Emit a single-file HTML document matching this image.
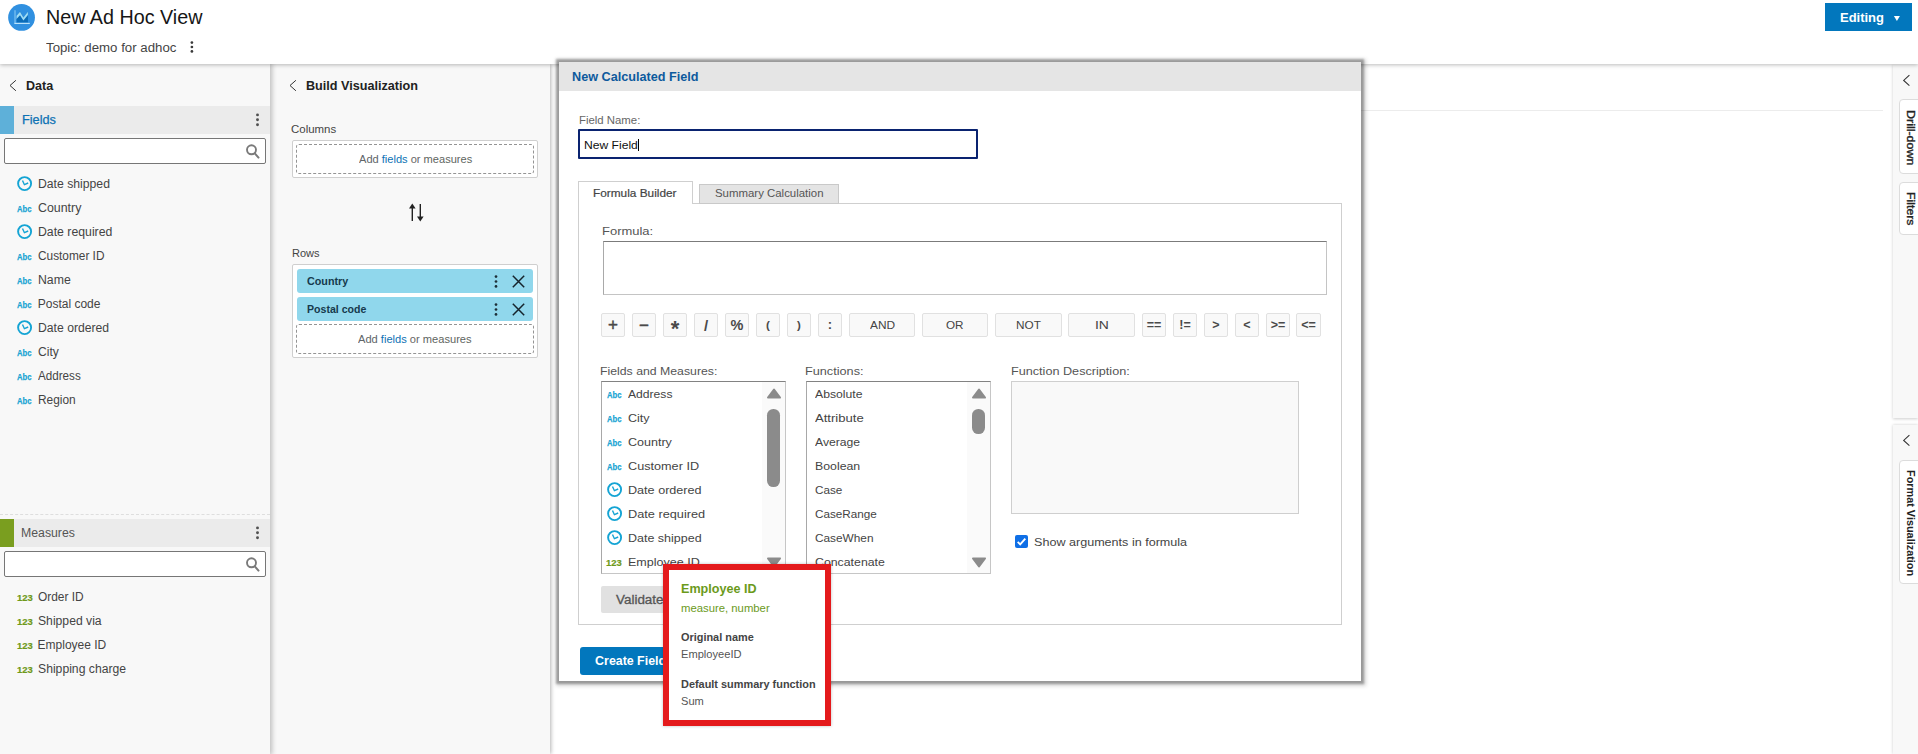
<!DOCTYPE html>
<html>
<head>
<meta charset="utf-8">
<title>New Ad Hoc View</title>
<style>
*{box-sizing:border-box;margin:0;padding:0}
html,body{width:1918px;height:754px;overflow:hidden;background:#fff}
body{font-family:"Liberation Sans",sans-serif;font-size:12px;color:#333;position:relative}
.abs{position:absolute}
.t{position:absolute;white-space:nowrap;transform-origin:0 50%}
#hdr{left:0;top:0;width:1918px;height:64px;background:#fff;box-shadow:0 1px 4px rgba(0,0,0,.27);z-index:5}
#pdata{left:0;top:64px;width:270px;height:690px;background:#f8f8f8;box-shadow:1px 0 5px 1px rgba(0,0,0,.24);z-index:3}
#pbuild{left:270px;top:64px;width:280px;height:690px;background:#f8f8f8;box-shadow:1px 0 4px rgba(0,0,0,.3);z-index:2}

.sechdr{position:absolute;left:0;width:270px;height:28px;background:#ebebeb}
.search{position:absolute;left:4px;width:262px;height:26px;background:#fff;border:1px solid #767676;border-radius:2px}
.abc{font-family:"Liberation Sans",sans-serif}
</style>
</head>
<body>
<div id="hdr" class="abs">
<svg class="abs" style="left:8px;top:4px" width="27" height="27" viewBox="8 4 27 27">
<circle cx="21.55" cy="17.45" r="13.4" fill="#3090e0"/>
<path d="M16.7 22.4V15.6L20 11.6L23.5 17.5L27.9 11.7V22.4Z" fill="#0b6cb8"/>
<path d="M16.5 15.8L20 11.7L23.4 17.5L27.9 11.7V14.9L23.4 20.6L20 15.2L16.5 19Z" fill="#9fdcf5"/>
<path d="M15 10.3V23.4" fill="none" stroke="#7ec4f1" stroke-width="1.2"/><path d="M14.4 23.4H29.8" fill="none" stroke="#c2e7fb" stroke-width="1.1"/>
</svg>
<div class="t" id="title" style="left:45.76px;top:6px;font-size:20.4px;line-height:22px;color:#161616;transform:scaleX(0.9675);">New Ad Hoc View</div>
<div class="t" id="topic" style="left:45.99px;top:41px;font-size:12px;line-height:14px;color:#444;transform:scaleX(1.1046);">Topic: demo for adhoc</div>
<svg class="abs" style="left:190px;top:41px;overflow:visible" width="4" height="12"><circle cx="1.9" cy="1.6" r="1.35" fill="#3a3a3a"/><circle cx="1.9" cy="6" r="1.35" fill="#3a3a3a"/><circle cx="1.9" cy="10.4" r="1.35" fill="#3a3a3a"/></svg>
<div class="abs" style="left:1825px;top:3px;width:87px;height:28px;background:#0277bd"></div>
<div class="t" id="editing" style="left:1839.79px;top:10px;font-size:12.8px;line-height:15px;color:#fff;font-weight:bold;transform:scaleX(1.0132);">Editing</div>
<svg class="abs" style="left:1893px;top:15px" width="8" height="7"><path d="M0.9 1H6.9L3.9 5.9Z" fill="#fff"/></svg>
</div>
<div id="pdata" class="abs">
<svg class="abs" style="left:8px;top:15px" width="10" height="13"><path d="M7.9 1.3L2 6.5L7.9 11.8" fill="none" stroke="#333" stroke-width="1.0"/></svg>
<div class="t" id="tdata" style="left:26.02px;top:15px;font-size:12px;line-height:14px;color:#222;font-weight:bold;transform:scaleX(1.0459);">Data</div>
<div class="sechdr" style="top:42px"><div class="abs" style="left:0;top:0;width:14px;height:28px;background:#5eb0d9"></div></div>
<div class="t" id="tfields" style="left:21.51px;top:49px;font-size:12px;line-height:14px;color:#0d72b4;transform:scaleX(1.0587);-webkit-text-stroke:.25px #0d72b4;">Fields</div>
<svg class="abs" style="left:255px;top:49px" width="5" height="14"><circle cx="2.5" cy="1.9" r="1.45" fill="#505050"/><circle cx="2.5" cy="6.8" r="1.45" fill="#505050"/><circle cx="2.5" cy="11.7" r="1.45" fill="#505050"/></svg>
<div class="search" style="top:74px"></div>
<svg class="abs" style="left:245px;top:78.5px" width="16" height="18"><circle cx="6.5" cy="6.8" r="4.5" fill="none" stroke="#7a7a7a" stroke-width="1.9"/><path d="M9.8 10.3L13.5 14.6" stroke="#7a7a7a" stroke-width="2" stroke-linecap="round"/></svg>
<svg class="abs" style="left:16.9px;top:111.9px" width="16" height="16" viewBox="0 0 16 16"><circle cx="7.6" cy="7.6" r="6.5" fill="none" stroke="#14a4d4" stroke-width="1.9"/><path d="M5.5 4.5L7.4 8.7L11.2 7" fill="none" stroke="#14a4d4" stroke-width="1.4"/></svg>
<div class="t" id="f0" style="left:37.75px;top:113px;font-size:12px;line-height:14px;color:#444;transform:scaleX(1.0173);">Date shipped</div>
<div class="t" id="fa1" style="left:16.88px;top:139px;font-size:9.8px;line-height:11px;color:#18a4d3;font-weight:bold;transform:scaleX(0.7838);-webkit-text-stroke:.25px #18a4d3;">Abc</div>
<div class="t" id="f1" style="left:37.75px;top:137px;font-size:12px;line-height:14px;color:#444;transform:scaleX(1.0324);">Country</div>
<svg class="abs" style="left:16.9px;top:159.9px" width="16" height="16" viewBox="0 0 16 16"><circle cx="7.6" cy="7.6" r="6.5" fill="none" stroke="#14a4d4" stroke-width="1.9"/><path d="M5.5 4.5L7.4 8.7L11.2 7" fill="none" stroke="#14a4d4" stroke-width="1.4"/></svg>
<div class="t" id="f2" style="left:37.75px;top:161px;font-size:12px;line-height:14px;color:#444;transform:scaleX(1.0225);">Date required</div>
<div class="t" id="fa3" style="left:16.88px;top:187px;font-size:9.8px;line-height:11px;color:#18a4d3;font-weight:bold;transform:scaleX(0.7838);-webkit-text-stroke:.25px #18a4d3;">Abc</div>
<div class="t" id="f3" style="left:37.75px;top:185px;font-size:12px;line-height:14px;color:#444;transform:scaleX(0.9869);">Customer ID</div>
<div class="t" id="fa4" style="left:16.88px;top:211px;font-size:9.8px;line-height:11px;color:#18a4d3;font-weight:bold;transform:scaleX(0.7838);-webkit-text-stroke:.25px #18a4d3;">Abc</div>
<div class="t" id="f4" style="left:37.75px;top:209px;font-size:12px;line-height:14px;color:#444;transform:scaleX(1.0233);">Name</div>
<div class="t" id="fa5" style="left:16.88px;top:235px;font-size:9.8px;line-height:11px;color:#18a4d3;font-weight:bold;transform:scaleX(0.7838);-webkit-text-stroke:.25px #18a4d3;">Abc</div>
<div class="t" id="f5" style="left:37.75px;top:233px;font-size:12px;line-height:14px;color:#444;">Postal code</div>
<svg class="abs" style="left:16.9px;top:255.9px" width="16" height="16" viewBox="0 0 16 16"><circle cx="7.6" cy="7.6" r="6.5" fill="none" stroke="#14a4d4" stroke-width="1.9"/><path d="M5.5 4.5L7.4 8.7L11.2 7" fill="none" stroke="#14a4d4" stroke-width="1.4"/></svg>
<div class="t" id="f6" style="left:37.75px;top:257px;font-size:12px;line-height:14px;color:#444;transform:scaleX(1.0156);">Date ordered</div>
<div class="t" id="fa7" style="left:16.88px;top:283px;font-size:9.8px;line-height:11px;color:#18a4d3;font-weight:bold;transform:scaleX(0.7838);-webkit-text-stroke:.25px #18a4d3;">Abc</div>
<div class="t" id="f7" style="left:37.75px;top:281px;font-size:12px;line-height:14px;color:#444;transform:scaleX(1.0048);">City</div>
<div class="t" id="fa8" style="left:16.88px;top:307px;font-size:9.8px;line-height:11px;color:#18a4d3;font-weight:bold;transform:scaleX(0.7838);-webkit-text-stroke:.25px #18a4d3;">Abc</div>
<div class="t" id="f8" style="left:37.75px;top:305px;font-size:12px;line-height:14px;color:#444;transform:scaleX(0.9714);">Address</div>
<div class="t" id="fa9" style="left:16.88px;top:331px;font-size:9.8px;line-height:11px;color:#18a4d3;font-weight:bold;transform:scaleX(0.7838);-webkit-text-stroke:.25px #18a4d3;">Abc</div>
<div class="t" id="f9" style="left:37.75px;top:329px;font-size:12px;line-height:14px;color:#444;transform:scaleX(0.9913);">Region</div>
<div class="abs" style="left:0;top:450px;width:270px;height:0;border-top:1px dashed #dedede"></div>
<div class="sechdr" style="top:454.6px"><div class="abs" style="left:0;top:0;width:14px;height:28px;background:#7a9e1f"></div></div>
<div class="t" id="tmeas" style="left:21.24px;top:462px;font-size:12px;line-height:14px;color:#555;transform:scaleX(1.0238);">Measures</div>
<svg class="abs" style="left:255px;top:461.7px" width="5" height="14"><circle cx="2.5" cy="1.9" r="1.45" fill="#505050"/><circle cx="2.5" cy="6.8" r="1.45" fill="#505050"/><circle cx="2.5" cy="11.7" r="1.45" fill="#505050"/></svg>
<div class="search" style="top:487.3px"></div>
<svg class="abs" style="left:245px;top:491.7px" width="16" height="18"><circle cx="6.5" cy="6.8" r="4.5" fill="none" stroke="#7a7a7a" stroke-width="1.9"/><path d="M9.8 10.3L13.5 14.6" stroke="#7a7a7a" stroke-width="2" stroke-linecap="round"/></svg>
<div class="t" id="mn0" style="left:16.81px;top:528px;font-size:9.6px;line-height:11px;color:#6f9a1b;font-weight:bold;transform:scaleX(0.9817);-webkit-text-stroke:.2px #6f9a1b;">123</div>
<div class="t" id="m0" style="left:37.6px;top:526px;font-size:12px;line-height:14px;color:#444;transform:scaleX(0.9927);">Order ID</div>
<div class="t" id="mn1" style="left:16.81px;top:552px;font-size:9.6px;line-height:11px;color:#6f9a1b;font-weight:bold;transform:scaleX(0.9817);-webkit-text-stroke:.2px #6f9a1b;">123</div>
<div class="t" id="m1" style="left:37.6px;top:550px;font-size:12px;line-height:14px;color:#444;transform:scaleX(1.0142);">Shipped via</div>
<div class="t" id="mn2" style="left:16.81px;top:576px;font-size:9.6px;line-height:11px;color:#6f9a1b;font-weight:bold;transform:scaleX(0.9817);-webkit-text-stroke:.2px #6f9a1b;">123</div>
<div class="t" id="m2" style="left:37.6px;top:574px;font-size:12px;line-height:14px;color:#444;">Employee ID</div>
<div class="t" id="mn3" style="left:16.81px;top:600px;font-size:9.6px;line-height:11px;color:#6f9a1b;font-weight:bold;transform:scaleX(0.9817);-webkit-text-stroke:.2px #6f9a1b;">123</div>
<div class="t" id="m3" style="left:37.6px;top:598px;font-size:12px;line-height:14px;color:#444;transform:scaleX(1.0155);">Shipping charge</div>
</div>
<div id="pbuild" class="abs">
<svg class="abs" style="left:18.30000000000001px;top:15.299999999999997px" width="10" height="13"><path d="M7.9 1.3L2 6.5L7.9 11.8" fill="none" stroke="#333" stroke-width="1.0"/></svg>
<div class="t" id="tbuild" style="left:35.51px;top:15px;font-size:12px;line-height:14px;color:#222;font-weight:bold;transform:scaleX(1.0520);">Build Visualization</div>
<div class="t" id="tcols" style="left:21.46px;top:59px;font-size:11.5px;line-height:12px;color:#444;transform:scaleX(0.9960);">Columns</div>
<div class="abs" style="left:22px;top:76px;width:246px;height:38px;background:#fff;border:1px solid #cfcfcf;border-radius:2px"></div>
<div class="abs" style="left:26px;top:80px;width:238px;height:30px;border:1px dashed #949494;border-radius:3px"></div>
<div class="t" id="tadd1" style="left:88.7px;top:89px;font-size:11.5px;line-height:12px;color:#555;transform:scaleX(0.9620);"><span style="color:#606468">Add </span><span style="color:#0d72b4">fields</span><span style="color:#666"> or </span><span style="color:#5e6560">measures</span></div>
<svg class="abs" style="left:137.60000000000002px;top:138.7px" width="17" height="19" viewBox="0 0 17 19">
<path d="M4.3 4V18" stroke="#222" stroke-width="1.4" fill="none"/><path d="M4.3 0.6L7.6 5.4H1Z" fill="#222"/>
<path d="M12.3 1V15" stroke="#222" stroke-width="1.4" fill="none"/><path d="M12.3 18.4L15.6 13.6H9Z" fill="#222"/>
</svg>
<div class="t" id="trows" style="left:21.54px;top:183px;font-size:11.5px;line-height:12px;color:#444;transform:scaleX(0.9601);">Rows</div>
<div class="abs" style="left:22px;top:200px;width:246px;height:94px;background:#fff;border:1px solid #cfcfcf;border-radius:2px"></div>
<div class="abs" style="left:27px;top:205px;width:236px;height:24px;background:#90d7ec;border-radius:3px"></div>
<div class="t" id="pill1" style="left:36.96px;top:211px;font-size:11.5px;line-height:12px;color:#163a4d;font-weight:bold;transform:scaleX(0.9362);">Country</div>
<svg class="abs" style="left:224.2px;top:210.8px" width="4" height="13"><circle cx="2" cy="1.6" r="1.35" fill="#1d2f38"/><circle cx="2" cy="6.5" r="1.35" fill="#1d2f38"/><circle cx="2" cy="11.4" r="1.35" fill="#1d2f38"/></svg>
<svg class="abs" style="left:241.60000000000002px;top:210.5px" width="13" height="13"><path d="M0.8 0.8L12.2 12.2M12.2 0.8L0.8 12.2" stroke="#16242c" stroke-width="1.5" fill="none"/></svg>
<div class="abs" style="left:27px;top:233px;width:236px;height:24px;background:#90d7ec;border-radius:3px"></div>
<div class="t" id="pill2" style="left:36.64px;top:239px;font-size:11.5px;line-height:12px;color:#163a4d;font-weight:bold;transform:scaleX(0.9191);">Postal code</div>
<svg class="abs" style="left:224.2px;top:238.8px" width="4" height="13"><circle cx="2" cy="1.6" r="1.35" fill="#1d2f38"/><circle cx="2" cy="6.5" r="1.35" fill="#1d2f38"/><circle cx="2" cy="11.4" r="1.35" fill="#1d2f38"/></svg>
<svg class="abs" style="left:241.60000000000002px;top:238.5px" width="13" height="13"><path d="M0.8 0.8L12.2 12.2M12.2 0.8L0.8 12.2" stroke="#16242c" stroke-width="1.5" fill="none"/></svg>
<div class="abs" style="left:26px;top:260px;width:238px;height:30px;border:1px dashed #949494;border-radius:3px"></div>
<div class="t" id="tadd2" style="left:88.4px;top:269px;font-size:11.5px;line-height:12px;color:#555;transform:scaleX(0.9654);"><span style="color:#606468">Add </span><span style="color:#0d72b4">fields</span><span style="color:#666"> or </span><span style="color:#5e6560">measures</span></div>
</div>
<div class="abs" style="left:562px;top:110px;width:1321px;height:1px;background:#ececec"></div>
<div class="abs" style="left:1893px;top:64px;width:25px;height:354px;background:#f8f8f8;box-shadow:0 1px 3px rgba(0,0,0,.2);z-index:1"></div>
<div class="abs" style="left:1893px;top:425px;width:25px;height:329px;background:#f8f8f8;box-shadow:0 0 3px rgba(0,0,0,.2);z-index:1"></div>
<svg class="abs" style="left:1901.9px;top:73.7px;z-index:2" width="9" height="13"><path d="M7.4 1.2L1.7 6.4L7.4 11.6" fill="none" stroke="#333" stroke-width="1.1"/></svg>
<svg class="abs" style="left:1901.8px;top:433.6px;z-index:2" width="9" height="13"><path d="M7.4 1.2L1.7 6.4L7.4 11.6" fill="none" stroke="#333" stroke-width="1.1"/></svg>
<div class="abs" style="left:1899px;top:99px;width:24px;height:75px;background:#fff;border:1px solid #dcdcdc;border-radius:4px;z-index:2"></div>
<div id="vt1" class="abs" style="left:1906px;top:110.4px;width:0;height:0;z-index:3"><div id="vt1_i" style="position:absolute;left:0;top:0;white-space:nowrap;font-size:11px;line-height:10px;-webkit-text-stroke:.35px #222;color:#222;transform-origin:0 0;transform:rotate(90deg) translateY(-10px) scaleX(1.1324)">Drill-down</div></div>
<div class="abs" style="left:1899px;top:182px;width:24px;height:53px;background:#fff;border:1px solid #dcdcdc;border-radius:4px;z-index:2"></div>
<div id="vt2" class="abs" style="left:1906px;top:192.3px;width:0;height:0;z-index:3"><div id="vt2_i" style="position:absolute;left:0;top:0;white-space:nowrap;font-size:11px;line-height:10px;-webkit-text-stroke:.35px #222;color:#222;transform-origin:0 0;transform:rotate(90deg) translateY(-10px) scaleX(1.1169)">Filters</div></div>
<div class="abs" style="left:1899px;top:460px;width:24px;height:124px;background:#fff;border:1px solid #dcdcdc;border-radius:4px;z-index:2"></div>
<div id="vt3" class="abs" style="left:1906px;top:470.3px;width:0;height:0;z-index:3"><div id="vt3_i" style="position:absolute;left:0;top:0;white-space:nowrap;font-size:11px;line-height:10px;font-weight:bold;color:#222;transform-origin:0 0;transform:rotate(90deg) translateY(-10px) scaleX(0.9882)">Format Visualization</div></div>
<div id="dlg" class="abs" style="left:559px;top:62px;width:802px;height:619px;background:#fff;box-shadow:0 0 2px 3px rgba(0,0,0,.29),1px 1px 4px 4px rgba(0,0,0,.16);z-index:10">
<div class="abs" style="left:0;top:0;width:802px;height:29px;background:#e5e5e5"></div>
<div class="t" id="dtitle" style="left:13.01px;top:8px;font-size:12px;line-height:14px;color:#0d5a9d;font-weight:bold;transform:scaleX(1.0539);">New Calculated Field</div>
<div class="t" id="dfn" style="left:20.31px;top:52px;font-size:11.5px;line-height:12px;color:#666;transform:scaleX(0.9891);">Field Name:</div>
<div class="abs" style="left:19px;top:67px;width:400px;height:30px;background:#fff;border:2px solid #0a2370;border-radius:1px"></div>
<div class="t" id="dnf" style="left:24.55px;top:77px;font-size:11.5px;line-height:12px;color:#111;transform:scaleX(1.0528);">New Field</div>
<div class="abs" style="left:78.5px;top:76.5px;width:1.5px;height:12px;background:#000"></div>
<div class="abs" style="left:19px;top:141px;width:764px;height:422px;border:1px solid #cfcfcf;background:#fff"></div>
<div class="abs" style="left:19px;top:119px;width:115px;height:23px;background:#fff;border:1px solid #cfcfcf;border-bottom:none"></div>
<div class="t" id="dtab1" style="left:34.28px;top:125px;font-size:11.5px;line-height:12px;color:#444;transform:scaleX(1.0285);-webkit-text-stroke:.2px #444;">Formula Builder</div>
<div class="abs" style="left:140px;top:122px;width:140px;height:20px;background:#e4e4e4;border:1px solid #c9c9c9"></div>
<div class="t" id="dtab2" style="left:156.34px;top:125px;font-size:11.5px;line-height:12px;color:#555;transform:scaleX(0.9928);">Summary Calculation</div>
<div class="t" id="dform" style="left:43.39px;top:163px;font-size:11px;line-height:12px;color:#555;transform:scaleX(1.1794);">Formula:</div>
<div class="abs" style="left:44px;top:179px;width:724px;height:54px;background:#fff;border:1px solid #c4c4c4;border-top-color:#7b7b7b;border-left-color:#a9a9a9"></div>
<div class="abs" style="left:42px;top:251px;width:24px;height:24px;background:#f9f9f9;border:1px solid #e1e1e1;border-radius:2px"></div>
<div class="abs" id="op0" style="left:42px;top:251px;width:24px;height:24px;line-height:24px;text-align:center;font-weight:normal;-webkit-text-stroke:.45px #4a4a4a;font-size:17px;color:#4a4a4a">+</div>
<div class="abs" style="left:73px;top:251px;width:24px;height:24px;background:#f9f9f9;border:1px solid #e1e1e1;border-radius:2px"></div>
<div class="abs" id="op1" style="left:73px;top:252px;width:24px;height:24px;line-height:24px;text-align:center;font-weight:normal;-webkit-text-stroke:.45px #4a4a4a;font-size:17px;color:#4a4a4a">−</div>
<div class="abs" style="left:104px;top:251px;width:24px;height:24px;background:#f9f9f9;border:1px solid #e1e1e1;border-radius:2px"></div>
<div class="abs" id="op2" style="left:104px;top:255px;width:24px;height:24px;line-height:24px;text-align:center;font-weight:bold;font-size:22px;color:#4a4a4a">*</div>
<div class="abs" style="left:135px;top:251px;width:24px;height:24px;background:#f9f9f9;border:1px solid #e1e1e1;border-radius:2px"></div>
<div class="abs" id="op3" style="left:135px;top:252px;width:24px;height:24px;line-height:24px;text-align:center;font-weight:bold;font-size:15px;color:#4a4a4a">/</div>
<div class="abs" style="left:166px;top:251px;width:24px;height:24px;background:#f9f9f9;border:1px solid #e1e1e1;border-radius:2px"></div>
<div class="abs" id="op4" style="left:166px;top:251px;width:24px;height:24px;line-height:24px;text-align:center;font-weight:bold;font-size:14.5px;color:#4a4a4a">%</div>
<div class="abs" style="left:197px;top:251px;width:24px;height:24px;background:#f9f9f9;border:1px solid #e1e1e1;border-radius:2px"></div>
<div class="abs" id="op5" style="left:197px;top:251px;width:24px;height:24px;line-height:24px;text-align:center;font-weight:bold;font-size:11.5px;color:#4a4a4a">(</div>
<div class="abs" style="left:228px;top:251px;width:24px;height:24px;background:#f9f9f9;border:1px solid #e1e1e1;border-radius:2px"></div>
<div class="abs" id="op6" style="left:228px;top:251px;width:24px;height:24px;line-height:24px;text-align:center;font-weight:bold;font-size:11.5px;color:#4a4a4a">)</div>
<div class="abs" style="left:259px;top:251px;width:24px;height:24px;background:#f9f9f9;border:1px solid #e1e1e1;border-radius:2px"></div>
<div class="abs" id="op7" style="left:259px;top:251px;width:24px;height:24px;line-height:24px;text-align:center;font-weight:bold;font-size:13px;color:#4a4a4a">:</div>
<div class="abs" style="left:290px;top:251px;width:66px;height:24px;background:#f9f9f9;border:1px solid #e1e1e1;border-radius:2px"></div>
<div class="t" id="op8" style="left:310.65px;top:257px;font-size:11px;line-height:12px;color:#444;transform:scaleX(1.0813);">AND</div>
<div class="abs" style="left:363px;top:251px;width:66px;height:24px;background:#f9f9f9;border:1px solid #e1e1e1;border-radius:2px"></div>
<div class="t" id="op9" style="left:387.15px;top:257px;font-size:11px;line-height:12px;color:#444;transform:scaleX(1.0639);">OR</div>
<div class="abs" style="left:436px;top:251px;width:67px;height:24px;background:#f9f9f9;border:1px solid #e1e1e1;border-radius:2px"></div>
<div class="t" id="op10" style="left:456.73px;top:257px;font-size:11px;line-height:12px;color:#444;transform:scaleX(1.0689);">NOT</div>
<div class="abs" style="left:509px;top:251px;width:67px;height:24px;background:#f9f9f9;border:1px solid #e1e1e1;border-radius:2px"></div>
<div class="t" id="op11" style="left:535.56px;top:257px;font-size:11px;line-height:12px;color:#444;transform:scaleX(1.2657);">IN</div>
<div class="abs" style="left:583px;top:251px;width:24px;height:24px;background:#f9f9f9;border:1px solid #e1e1e1;border-radius:2px"></div>
<div class="abs" id="op12" style="left:583px;top:251px;width:24px;height:24px;line-height:24px;text-align:center;font-weight:bold;font-size:12.5px;color:#4a4a4a">==</div>
<div class="abs" style="left:614px;top:251px;width:24px;height:24px;background:#f9f9f9;border:1px solid #e1e1e1;border-radius:2px"></div>
<div class="abs" id="op13" style="left:614px;top:251px;width:24px;height:24px;line-height:24px;text-align:center;font-weight:bold;font-size:12.5px;color:#4a4a4a">!=</div>
<div class="abs" style="left:645px;top:251px;width:24px;height:24px;background:#f9f9f9;border:1px solid #e1e1e1;border-radius:2px"></div>
<div class="abs" id="op14" style="left:645px;top:251px;width:24px;height:24px;line-height:24px;text-align:center;font-weight:bold;font-size:12.5px;color:#4a4a4a">&gt;</div>
<div class="abs" style="left:676px;top:251px;width:24px;height:24px;background:#f9f9f9;border:1px solid #e1e1e1;border-radius:2px"></div>
<div class="abs" id="op15" style="left:676px;top:251px;width:24px;height:24px;line-height:24px;text-align:center;font-weight:bold;font-size:12.5px;color:#4a4a4a">&lt;</div>
<div class="abs" style="left:707px;top:251px;width:24px;height:24px;background:#f9f9f9;border:1px solid #e1e1e1;border-radius:2px"></div>
<div class="abs" id="op16" style="left:707px;top:251px;width:24px;height:24px;line-height:24px;text-align:center;font-weight:bold;font-size:12.5px;color:#4a4a4a">&gt;=</div>
<div class="abs" style="left:737px;top:251px;width:25px;height:24px;background:#f9f9f9;border:1px solid #e1e1e1;border-radius:2px"></div>
<div class="abs" id="op17" style="left:737px;top:251px;width:25px;height:24px;line-height:24px;text-align:center;font-weight:bold;font-size:12.5px;color:#4a4a4a">&lt;=</div>
<div class="t" id="dlab1" style="left:41.44px;top:303px;font-size:11px;line-height:12px;color:#555;transform:scaleX(1.1161);">Fields and Measures:</div>
<div class="t" id="dlab2" style="left:246.41px;top:303px;font-size:11px;line-height:12px;color:#555;transform:scaleX(1.1535);">Functions:</div>
<div class="t" id="dlab3" style="left:451.51px;top:303px;font-size:11px;line-height:12px;color:#555;transform:scaleX(1.1491);">Function Description:</div>
<div class="abs" style="left:42px;top:319px;width:185px;height:193px;background:#fff;border:1px solid #c6c6c6;border-top-color:#828282;border-left-color:#a8a8a8"></div>
<div class="abs" style="left:203px;top:320px;width:23px;height:191px;background:#fafafa"></div>
<svg class="abs" style="left:206.6px;top:325.8px" width="16" height="12"><path d="M8 1.6L14 9.6H2Z" fill="#8b8b8b" stroke="#8b8b8b" stroke-width="2" stroke-linejoin="round"/></svg>
<div class="abs" style="left:208.3px;top:347px;width:12.6px;height:77.69999999999999px;background:#8b8b8b;border-radius:6.3px"></div>
<svg class="abs" style="left:206.6px;top:493.6px" width="16" height="12"><path d="M8 10.4L14 2.4H2Z" fill="#8b8b8b" stroke="#8b8b8b" stroke-width="2" stroke-linejoin="round"/></svg>
<div class="t" id="da0" style="left:47.98px;top:327px;font-size:9.8px;line-height:11px;color:#18a4d3;font-weight:bold;transform:scaleX(0.7838);-webkit-text-stroke:.25px #18a4d3;">Abc</div>
<div class="t" id="di0" style="left:68.9px;top:326px;font-size:11px;line-height:12px;color:#444;transform:scaleX(1.1022);">Address</div>
<div class="t" id="da1" style="left:47.98px;top:351px;font-size:9.8px;line-height:11px;color:#18a4d3;font-weight:bold;transform:scaleX(0.7838);-webkit-text-stroke:.25px #18a4d3;">Abc</div>
<div class="t" id="di1" style="left:68.9px;top:350px;font-size:11px;line-height:12px;color:#444;transform:scaleX(1.1396);">City</div>
<div class="t" id="da2" style="left:47.98px;top:375px;font-size:9.8px;line-height:11px;color:#18a4d3;font-weight:bold;transform:scaleX(0.7838);-webkit-text-stroke:.25px #18a4d3;">Abc</div>
<div class="t" id="di2" style="left:68.9px;top:374px;font-size:11px;line-height:12px;color:#444;transform:scaleX(1.1395);">Country</div>
<div class="t" id="da3" style="left:47.98px;top:399px;font-size:9.8px;line-height:11px;color:#18a4d3;font-weight:bold;transform:scaleX(0.7838);-webkit-text-stroke:.25px #18a4d3;">Abc</div>
<div class="t" id="di3" style="left:68.9px;top:398px;font-size:11px;line-height:12px;color:#444;transform:scaleX(1.1506);">Customer ID</div>
<svg class="abs" style="left:47.8px;top:420.0px" width="16" height="16" viewBox="0 0 16 16"><circle cx="7.6" cy="7.6" r="6.5" fill="none" stroke="#14a4d4" stroke-width="1.9"/><path d="M5.5 4.5L7.4 8.7L11.2 7" fill="none" stroke="#14a4d4" stroke-width="1.4"/></svg>
<div class="t" id="di4" style="left:68.9px;top:422px;font-size:11px;line-height:12px;color:#444;transform:scaleX(1.1462);">Date ordered</div>
<svg class="abs" style="left:47.8px;top:444.0px" width="16" height="16" viewBox="0 0 16 16"><circle cx="7.6" cy="7.6" r="6.5" fill="none" stroke="#14a4d4" stroke-width="1.9"/><path d="M5.5 4.5L7.4 8.7L11.2 7" fill="none" stroke="#14a4d4" stroke-width="1.4"/></svg>
<div class="t" id="di5" style="left:68.9px;top:446px;font-size:11px;line-height:12px;color:#444;transform:scaleX(1.1569);">Date required</div>
<svg class="abs" style="left:47.8px;top:468.0px" width="16" height="16" viewBox="0 0 16 16"><circle cx="7.6" cy="7.6" r="6.5" fill="none" stroke="#14a4d4" stroke-width="1.9"/><path d="M5.5 4.5L7.4 8.7L11.2 7" fill="none" stroke="#14a4d4" stroke-width="1.4"/></svg>
<div class="t" id="di6" style="left:68.9px;top:470px;font-size:11px;line-height:12px;color:#444;transform:scaleX(1.1350);">Date shipped</div>
<div class="t" id="dn7" style="left:47.21px;top:495px;font-size:9.6px;line-height:11px;color:#6f9a1b;font-weight:bold;transform:scaleX(0.9817);-webkit-text-stroke:.2px #6f9a1b;">123</div>
<div class="t" id="di7" style="left:68.9px;top:494px;font-size:11px;line-height:12px;color:#444;transform:scaleX(1.1388);">Employee ID</div>
<div class="abs" style="left:247px;top:319px;width:185px;height:193px;background:#fff;border:1px solid #c6c6c6;border-top-color:#828282;border-left-color:#a8a8a8"></div>
<div class="abs" style="left:408px;top:320px;width:23px;height:191px;background:#fafafa"></div>
<svg class="abs" style="left:411.6px;top:325.8px" width="16" height="12"><path d="M8 1.6L14 9.6H2Z" fill="#8b8b8b" stroke="#8b8b8b" stroke-width="2" stroke-linejoin="round"/></svg>
<div class="abs" style="left:413.3px;top:347px;width:12.6px;height:24.69999999999999px;background:#8b8b8b;border-radius:6.3px"></div>
<svg class="abs" style="left:411.6px;top:493.6px" width="16" height="12"><path d="M8 10.4L14 2.4H2Z" fill="#8b8b8b" stroke="#8b8b8b" stroke-width="2" stroke-linejoin="round"/></svg>
<div class="t" id="df0" style="left:255.9px;top:326px;font-size:11px;line-height:12px;color:#444;transform:scaleX(1.1095);">Absolute</div>
<div class="t" id="df1" style="left:255.9px;top:350px;font-size:11px;line-height:12px;color:#444;transform:scaleX(1.1895);">Attribute</div>
<div class="t" id="df2" style="left:255.9px;top:374px;font-size:11px;line-height:12px;color:#444;transform:scaleX(1.1060);">Average</div>
<div class="t" id="df3" style="left:255.9px;top:398px;font-size:11px;line-height:12px;color:#444;transform:scaleX(1.1185);">Boolean</div>
<div class="t" id="df4" style="left:255.9px;top:422px;font-size:11px;line-height:12px;color:#444;transform:scaleX(1.0640);">Case</div>
<div class="t" id="df5" style="left:255.9px;top:446px;font-size:11px;line-height:12px;color:#444;transform:scaleX(1.0642);">CaseRange</div>
<div class="t" id="df6" style="left:255.9px;top:470px;font-size:11px;line-height:12px;color:#444;transform:scaleX(1.0754);">CaseWhen</div>
<div class="t" id="df7" style="left:255.9px;top:494px;font-size:11px;line-height:12px;color:#444;transform:scaleX(1.1202);">Concatenate</div>
<div class="abs" style="left:452px;top:319px;width:288px;height:133px;background:#f9f9f9;border:1px solid #cfcfcf"></div>
<svg class="abs" style="left:456px;top:473px" width="13" height="13" viewBox="0 0 13 13"><rect x="0" y="0" width="13" height="13" rx="2" fill="#0f6fe6"/><path d="M2.7 6.8L5.2 9.3L10.3 3.6" fill="none" stroke="#fff" stroke-width="1.9"/></svg>
<div class="t" id="dchk" style="left:474.51px;top:474px;font-size:11px;line-height:12px;color:#444;transform:scaleX(1.1435);">Show arguments in formula</div>
<div class="abs" style="left:42px;top:524px;width:80px;height:27px;background:#e1e1e1;border-radius:2px"></div>
<div class="t" id="dval" style="left:57.2px;top:531px;font-size:12.5px;line-height:14px;color:#555;transform:scaleX(1.0746);-webkit-text-stroke:.3px #555;">Validate</div>
<div class="abs" style="left:21px;top:585px;width:101px;height:28px;background:#0277bd;border-radius:3px"></div>
<div class="t" id="dcreate" style="left:36.11px;top:592px;font-size:12.4px;line-height:14px;color:#fff;font-weight:bold;">Create Field</div>
</div>
<div class="abs" style="left:663px;top:564px;width:168px;height:162px;background:#fff;border:6px solid #e41a1c;box-shadow:0 0 3px rgba(0,0,0,.25);z-index:20">
<div class="t" id="tp1" style="left:11.81px;top:11px;font-size:12.8px;line-height:15px;color:#6b9a1b;font-weight:bold;transform:scaleX(0.9844);">Employee ID</div>
<div class="t" id="tp2" style="left:11.89px;top:32px;font-size:11.5px;line-height:12px;color:#6b9a1b;transform:scaleX(0.9838);">measure, number</div>
<div class="t" id="tp3" style="left:12.26px;top:61px;font-size:11px;line-height:12px;color:#444;font-weight:bold;transform:scaleX(0.9913);">Original name</div>
<div class="t" id="tp4" style="left:11.73px;top:78px;font-size:11px;line-height:12px;color:#555;transform:scaleX(1.0107);">EmployeeID</div>
<div class="t" id="tp5" style="left:11.92px;top:108px;font-size:11px;line-height:12px;color:#444;font-weight:bold;transform:scaleX(0.9921);">Default summary function</div>
<div class="t" id="tp6" style="left:12.25px;top:125px;font-size:11px;line-height:12px;color:#555;transform:scaleX(1.0090);">Sum</div>
</div>
</body>
</html>
